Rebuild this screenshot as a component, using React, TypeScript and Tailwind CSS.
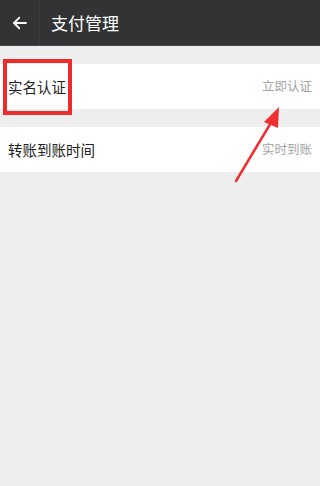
import React from "react"

const font = { fontFamily: '"Noto Sans CJK SC", "Noto Sans", sans-serif' }

const Row = (props: { label: string; value: string }) => {
  const { label, value } = props
  return (
    <div className="flex h-[45px] items-center justify-between bg-white pl-2 pr-2">
      <div className="text-[14.5px] text-[#222]">{label}</div>
      <div className="text-[12.5px] text-[#a3a3a3]">{value}</div>
    </div>
  )
}

const App = () => {
  return (
    <div className="relative h-[486px] w-[320px] overflow-hidden bg-[#eeeeee]" style={font}>
      {/* 顶部栏 */}
      <div className="flex h-[46px] items-center bg-[#313335] border-b border-[#4a4c4e]">
        <div className="flex h-full w-[40px] items-center justify-center border-r border-[#3a3c3e]">
          <svg width="18" height="18" viewBox="0 0 24 24" fill="none" stroke="#fff" strokeWidth="2.4" strokeLinecap="round" strokeLinejoin="round">
            <path d="M20 12H4" />
            <path d="M11 5l-7 7 7 7" />
          </svg>
        </div>
        <div className="pl-[11px] text-[17px] text-white">支付管理</div>
      </div>

      <div className="pt-[18px]">
        <Row label="实名认证" value="立即认证" />
        <div className="h-[18px]" />
        <Row label="转账到账时间" value="实时到账" />
      </div>

      {/* 标注：红框 */}
      <div className="pointer-events-none absolute left-[3px] top-[59px] h-[56px] w-[69px] border-4 border-[#ee2a2a]" />

      {/* 标注：红色箭头 */}
      <svg className="pointer-events-none absolute left-0 top-0" width="320" height="486" viewBox="0 0 320 486">
        <path d="M236 181 L272 121" stroke="#f03030" strokeWidth="2.5" strokeLinecap="round" />
        <path d="M279 107 L264 122 L278 128 Z" fill="#f03030" />
      </svg>
    </div>
  )
}

export default App
